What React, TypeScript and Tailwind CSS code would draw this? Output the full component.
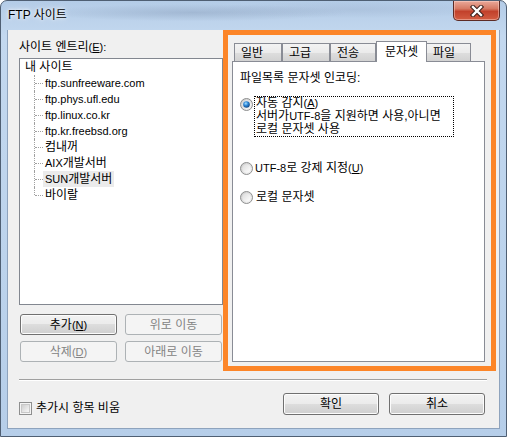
import React from "react";

const L = ({ children }: { children: React.ReactNode }) => (
  <span className="text-[11px]">{children}</span>
);

const U = ({ children }: { children: React.ReactNode }) => (
  <span className="text-[11px] underline underline-offset-[1px]">{children}</span>
);

function Radio({ checked }: { checked?: boolean }) {
  return (
    <svg width="13" height="13" viewBox="0 0 13 13" className="shrink-0">
      <defs>
        <linearGradient id="rOuter" x1="0" y1="0" x2="1" y2="1">
          <stop offset="0" stopColor="#c8c8c8" />
          <stop offset="1" stopColor="#f7f7f7" />
        </linearGradient>
        <linearGradient id="rInner" x1="0" y1="0" x2="1" y2="1">
          <stop offset="0" stopColor="#dcdcdc" />
          <stop offset="1" stopColor="#ffffff" />
        </linearGradient>
        <radialGradient id="rDot" cx="0.4" cy="0.35" r="0.7">
          <stop offset="0" stopColor="#a8e2ff" />
          <stop offset="0.45" stopColor="#2d87d8" />
          <stop offset="1" stopColor="#0f3f78" />
        </radialGradient>
      </defs>
      <circle cx="6.5" cy="6.5" r="6" fill="url(#rOuter)" stroke="#8e8f8f" strokeWidth="1" />
      <circle cx="6.5" cy="6.5" r="4.2" fill="url(#rInner)" />
      {checked && <circle cx="6.5" cy="6.5" r="3.3" fill="url(#rDot)" />}
    </svg>
  );
}

function Btn({
  children,
  disabled,
  className = "",
}: {
  children: React.ReactNode;
  disabled?: boolean;
  className?: string;
}) {
  return disabled ? (
    <div
      className={`flex items-center justify-center rounded-[3px] border border-[#adb2b5] bg-[#f4f4f4] text-[12px] leading-[14px] text-[#838383] ${className}`}
    >
      {children}
    </div>
  ) : (
    <div
      className={`flex items-center justify-center rounded-[3px] border border-[#707070] bg-[linear-gradient(#f2f2f2_0%,#ebebeb_50%,#dddddd_50%,#cfcfcf_100%)] text-[12px] leading-[14px] text-black shadow-[inset_0_0_0_1px_#fcfcfc] ${className}`}
    >
      {children}
    </div>
  );
}

const treeItems: { label: React.ReactNode; hl?: boolean }[] = [
  { label: <L>ftp.sunfreeware.com</L> },
  { label: <L>ftp.phys.ufl.edu</L> },
  { label: <L>ftp.linux.co.kr</L> },
  { label: <L>ftp.kr.freebsd.org</L> },
  { label: "컴내꺼" },
  { label: <><L>AIX</L>개발서버</> },
  { label: <><L>SUN</L>개발서버</>, hl: true },
  { label: "바이랄" },
];

const tabs = ["일반", "고급", "전송", "문자셋", "파일"];

export default function App() {
  return (
    <div className="relative flex h-[437px] w-[507px] flex-col overflow-hidden rounded-t-[7px] border border-[#4f5f73] bg-[linear-gradient(180deg,#b4cce7_0%,#c3d8ef_8%,#bcd3ec_60%,#b6cee9_100%)] font-['Liberation_Sans','Noto_Sans_CJK_KR',sans-serif] text-[12px] text-black">
      {/* title bar */}
      <div className="relative flex h-[29px] shrink-0 items-start bg-[radial-gradient(ellipse_at_38%_40%,rgba(120,140,170,0.35),transparent_35%),radial-gradient(ellipse_at_70%_30%,rgba(140,160,190,0.25),transparent_30%)]">
        <div className="ml-[7px] mt-[7px] leading-[14px] text-black [text-shadow:0_0_6px_#ffffff,0_0_3px_#ffffff]">
          FTP 사이트
        </div>
        <div className="ml-auto mr-[6px] flex h-[20px] w-[47px] items-center justify-center rounded-b-[5px] border border-t-0 border-[#5d2b25] bg-[linear-gradient(#eaa99a_0%,#d67a64_40%,#c2412b_55%,#d35d42_100%)] shadow-[inset_0_0_0_1px_rgba(255,220,210,0.45)]">
          <svg width="16" height="12" viewBox="0 0 16 12">
            <path d="M4 2 L12 10 M12 2 L4 10" stroke="#3a1e1a" strokeWidth="4.4" strokeLinecap="square" />
            <path d="M4 2 L12 10 M12 2 L4 10" stroke="#ffffff" strokeWidth="2.4" strokeLinecap="square" />
          </svg>
        </div>
      </div>

      {/* client area */}
      <div className="ml-[6px] flex h-[399px] w-[493px] flex-col border-x border-b border-[#8ea3bd] bg-[#f0f0f0]">
        <div className="flex h-[341px] shrink-0">
          {/* left column */}
          <div className="ml-[11px] flex w-[204px] flex-col pt-[9px]">
            <div className="leading-[16px]">
              사이트 엔트리<L>(</L><U>E</U><L>):</L>
            </div>
            <div className="mt-[3px] h-[247px] border border-[#828790] bg-white">
              <div className="h-[16px] pl-[5px] leading-[16px]">내 사이트</div>
              {treeItems.map((it, i) => {
                const last = i === treeItems.length - 1;
                return (
                  <div key={i} className="flex h-[16px] items-center">
                    <div className="relative h-full w-[23px] shrink-0">
                      <div
                        className={`absolute left-[14px] top-0 w-0 border-l border-dotted border-[#a0a0a0] ${last ? "h-[8px]" : "h-[16px]"}`}
                      />
                      <div className="absolute left-[15px] top-[8px] h-0 w-[8px] border-t border-dotted border-[#a0a0a0]" />
                    </div>
                    <div
                      className={`flex h-[16px] items-center whitespace-nowrap px-[2px] leading-[16px] ${it.hl ? "bg-[#ebebeb]" : ""}`}
                    >
                      {it.label}
                    </div>
                  </div>
                );
              })}
            </div>
            <div className="mt-[9px] grid grid-cols-[97px_97px] gap-x-[8px] gap-y-[6px] pl-px">
              <Btn className="h-[21px] border-[#3c3c3c]">
                추가<L>(</L><U>N</U><L>)</L>
              </Btn>
              <Btn disabled className="h-[21px]">
                위로 이동
              </Btn>
              <Btn disabled className="h-[21px]">
                삭제<L>(</L><U>D</U><L>)</L>
              </Btn>
              <Btn disabled className="h-[21px]">
                아래로 이동
              </Btn>
            </div>
          </div>

          {/* orange highlighted tab control */}
          <div className="flex h-[341px] w-[273px] flex-col border-[5px] border-[#fc8528] bg-[#f0f0f0] pb-[4px] pl-[4px] pr-[6px] pt-[6px]">
            <div className="relative z-10 -mb-px flex h-[21px] items-end pl-[2px]">
              {tabs.map((t, i) => {
                const sel = i === 3;
                const w = ["w-[48px]", "w-[48px]", "w-[46px]", "w-[51px]", "w-[44px]"][i];
                return sel ? (
                  <div
                    key={t}
                    className={`${w} flex h-[21px] items-center border border-b-0 border-[#898c95] bg-white pb-[1px] pl-[8px] leading-[14px]`}
                  >
                    {t}
                  </div>
                ) : (
                  <div
                    key={t}
                    className={`${w} mb-px flex h-[18px] items-center border border-b-0 border-[#898c95] bg-[linear-gradient(#f3f3f3_0%,#ebebeb_50%,#dedede_50%,#d2d2d2_100%)] pl-[6px] leading-[14px] ${i === 4 ? "border-l-0" : ""}`}
                  >
                    {t}
                  </div>
                );
              })}
            </div>
            <div className="flex flex-1 flex-col border border-[#898c95] bg-white pl-[7px] pt-[8px]">
              <div className="leading-[16px]">파일목록 문자셋 인코딩:</div>
              <div className="mt-[10px] flex items-start">
                <div className="mt-[2px]">
                  <Radio checked />
                </div>
                <div className="ml-px w-[200px] whitespace-nowrap border border-dotted border-black px-px leading-[13px]">
                  <div>
                    자동 감지<L>(</L><U>A</U><L>)</L>
                  </div>
                  <div>
                    서버가<L>UTF-8</L>을 지원하면 사용,아니면
                  </div>
                  <div>로컬 문자셋 사용</div>
                </div>
              </div>
              <div className="mt-[25px] flex items-center gap-[2px] leading-[13px]">
                <Radio />
                <span>
                  <L>UTF-8</L>로 강제 지정<L>(</L><U>U</U><L>)</L>
                </span>
              </div>
              <div className="mt-[16px] flex items-center gap-[3px] leading-[13px]">
                <Radio />
                <span>로컬 문자셋</span>
              </div>
            </div>
          </div>
        </div>

        {/* separator */}
        <div className="ml-[11px] mt-[8px] w-[468px] border-b border-t border-b-white border-t-[#a0a0a0]" />

        {/* bottom row */}
        <div className="flex items-start">
          <div className="ml-[11px] mt-[20px] flex items-center gap-[4px]">
            <div className="flex h-[13px] w-[13px] items-center justify-center border border-[#8e8f8f] bg-[#f4f4f4]">
              <div className="h-[9px] w-[9px] border border-[#c8c8c8] bg-[linear-gradient(135deg,#cfcfcf,#f7f7f7)]" />
            </div>
            <span className="leading-[14px]">추가시 항목 비움</span>
          </div>
          <div className="ml-auto mr-[14px] mt-[12px] flex gap-[10px]">
            <Btn className="h-[22px] w-[96px]">확인</Btn>
            <Btn className="h-[22px] w-[96px]">취소</Btn>
          </div>
        </div>
      </div>
    </div>
  );
}
